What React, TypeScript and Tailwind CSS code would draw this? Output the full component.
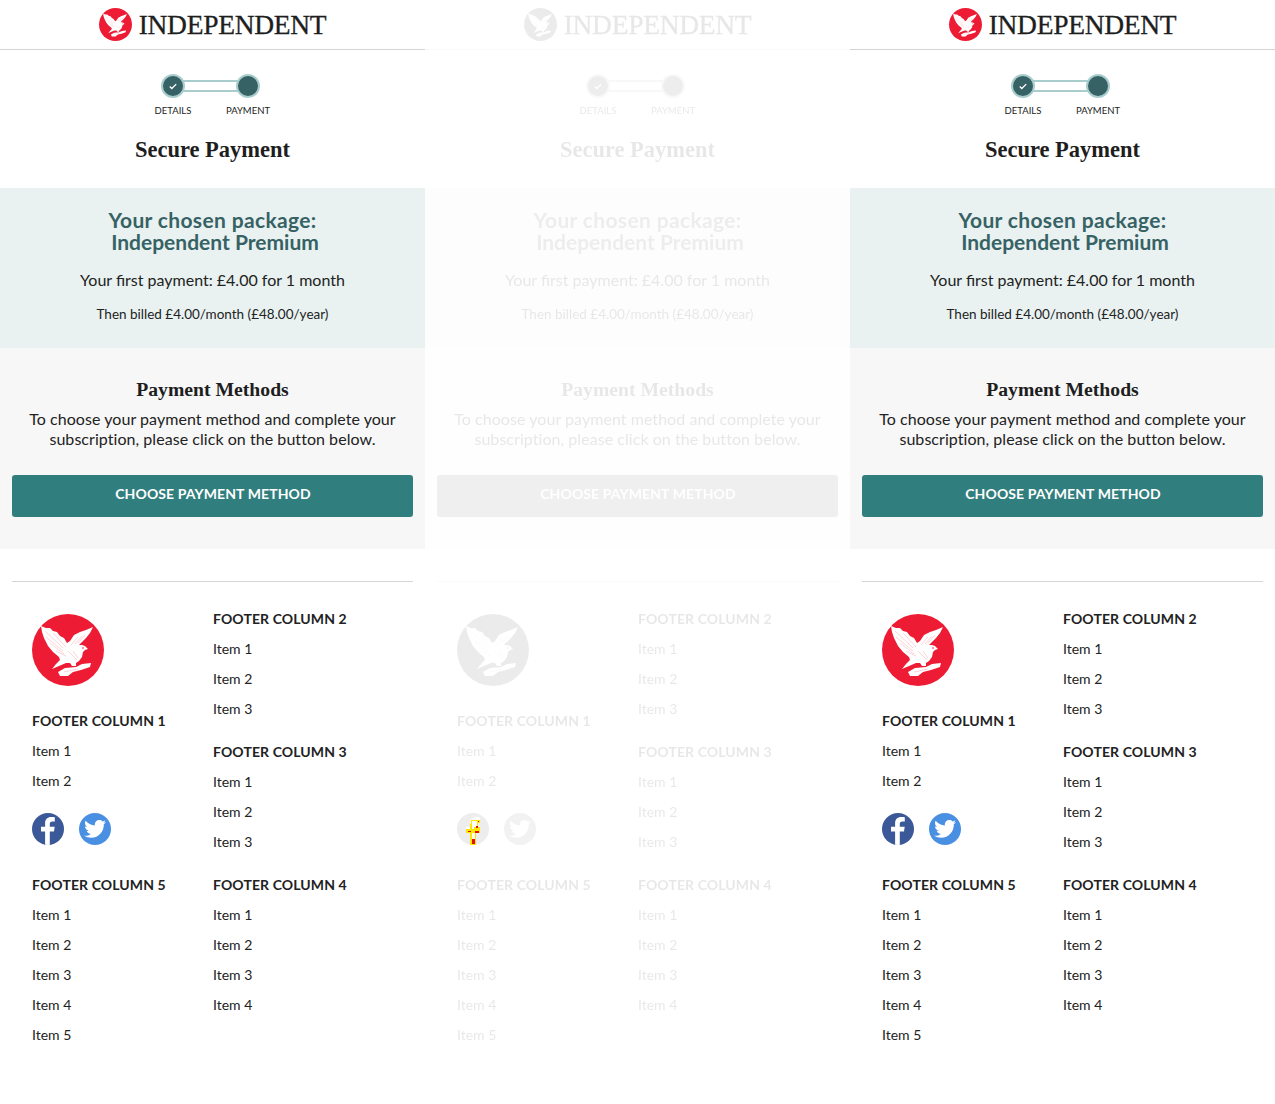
import React from "react";

const serif = "font-['Liberation_Serif',serif]";

const Eagle = ({ className }: { className?: string }) => (
  <svg viewBox="0 0 72 72" className={className}>
    <circle cx="36" cy="36" r="36" fill="#ed1b33" />
    <g fill="#ffffff">
      {/* wings, body and tail */}
      <path d="M9 12L14 14L18 14L21 17L25 18L28 22L32 24L35 29L38 27L42 21L48 18L54 16L61 13L58 19L54 24L50 28L47 31L50 31L53 32L56 35L53 36L51 38L50 43L47 47L44 49L44 52L40 52L38 49L34 49L27 52L20 55L24 50L28 46L27 43L21 38L16 32L12 24L10 18Z" />
      {/* perch */}
      <path d="M26 58L33 54L44 53L50 50L59 49L58 53L49 56L41 58L36 62L28 62Z" />
    </g>
    <g fill="none" stroke="#ed1b33" strokeWidth="0.35" opacity="0.55">
      <path d="M13 17l18 17M14 23l17 14M18 29l14 11M24 37l10 5M21 19l13 14M39 31l7-8M43 30l7-8M46 29l7-8" />
      <path d="M36 37l9 9M41 37l5 7M32 58l14-3" />
    </g>
    <circle cx="51" cy="34" r="0.8" fill="#ed1b33" />
  </svg>
);

const Logo = () => (
  <div className="h-[50px] border-b border-[#d4d4d4] flex items-center justify-center gap-[7px] bg-white">
    <Eagle className="w-[33px] h-[33px]" />
    <span className={`${serif} text-[27.5px] leading-none text-[#1e1e1e] tracking-[-0.3px] mt-[1px] [-webkit-text-stroke:0.3px_#1e1e1e]`}>
      INDEPENDENT
    </span>
  </div>
);

const Steps = () => (
  <div className="h-[138px] flex flex-col items-center">
    <div className="relative w-[99px] h-[24px] mt-[24px] mr-[5px] flex items-center justify-between">
      <div className="absolute left-[10px] right-[10px] top-[6px] h-[12px] border-y-2 border-[#a9cccd]" />
      <div className="relative w-[24px] h-[24px] rounded-full bg-[#376265] border-[2px] border-[#a9cccd] flex items-center justify-center">
        <svg viewBox="0 0 10 8" className="w-[8px] h-[7px]">
          <path d="M1 4l2.500 2.500L9 1" fill="none" stroke="#ffffff" strokeWidth="1.600" />
        </svg>
      </div>
      <div className="relative w-[24px] h-[24px] rounded-full bg-[#376265] border-[2px] border-[#a9cccd]" />
    </div>
    <div className="w-[125px] flex justify-between mt-[6px] mr-[4px] text-[9.5px] leading-[14px] text-[#222]">
      <span className="w-[50px] text-center">DETAILS</span>
      <span className="w-[50px] text-center">PAYMENT</span>
    </div>
    <h1 className={`${serif} mt-[17px] text-[22.5px] leading-[30px] font-bold text-[#1e1e1e]`}>Secure Payment</h1>
  </div>
);

const Col = ({ title, items }: { title: string; items: string[] }) => (
  <div>
    <div className="text-[14px] leading-[20px] font-bold tracking-[0.1px] text-[#222]">{title}</div>
    {items.map((item) => (
      <div key={item} className="mt-[10px] text-[14px] leading-[20px] text-[#222]">
        {item}
      </div>
    ))}
  </div>
);

const items = (n: number) => Array.from({ length: n }, (_, i) => `Item ${i + 1}`);

const Social = () => (
  <div className="flex gap-[15px] mt-[22px]">
    <div className="w-[32px] h-[32px] rounded-full bg-[#3b5998] overflow-hidden">
      <svg viewBox="0 0 32 32" className="w-[32px] h-[32px]">
        <path
          d="M17.800 32V18.600h4.200l.7-4.800h-4.900v-3c0-1.400.5-2.400 2.500-2.400h2.500V4.200c-.5-.1-2-.2-3.600-.2-3.600 0-6.100 2.200-6.100 6.200v3.600H9v4.800h4.100V32z"
          fill="#ffffff"
        />
      </svg>
    </div>
    <div className="w-[32px] h-[32px] rounded-full bg-[#4a90e2] flex items-center justify-center">
      <svg viewBox="0 0 24 24" className="w-[24px] h-[24px]">
        <path
          d="M23 5.100c-.8.4-1.700.6-2.600.7.9-.6 1.600-1.400 2-2.500-.9.5-1.800.9-2.900 1.100C18.700 3.500 17.500 3 16.300 3c-2.500 0-4.500 2-4.500 4.500 0 .4 0 .7.1 1C8.100 8.300 4.800 6.500 2.600 3.800c-.4.7-.6 1.400-.6 2.300 0 1.600.8 2.900 2 3.700-.7 0-1.400-.2-2-.6v.1c0 2.200 1.600 4 3.600 4.400-.4.1-.8.2-1.200.2-.3 0-.6 0-.8-.1.6 1.800 2.200 3.100 4.200 3.100-1.500 1.200-3.500 1.900-5.600 1.900-.4 0-.7 0-1.100-.1 2 1.300 4.400 2 6.900 2 8.300 0 12.800-6.900 12.800-12.800v-.6c.9-.6 1.600-1.400 2.200-2.200z"
          fill="#ffffff"
        />
      </svg>
    </div>
  </div>
);

const Panel = ({ faded }: { faded?: boolean }) => (
  <div className={faded ? "w-[425px] opacity-10 grayscale" : "w-[425px]"}>
    <Logo />
    <Steps />
    <div className="h-[160px] bg-[#e9f2f1] pt-[21px] text-center">
      <h2 className="text-[21px] leading-[22px] font-bold text-[#376265]">
        <span className="tracking-[0.35px]">Your chosen package:</span>
        <br />
        <span className="pl-[5px]">Independent Premium</span>
      </h2>
      <p className="mt-[15px] text-[16px] leading-[24px] text-[#222]">Your first payment: £4.00 for 1 month</p>
      <p className="mt-[12px] text-[13.500px] leading-[20px] text-[#222]">Then billed £4.00/month (£48.00/year)</p>
    </div>
    <div className="h-[201px] bg-[#f7f7f7] px-[12px] pt-[26px] text-center">
      <h3 className={`${serif} text-[19.700px] leading-[30px] font-bold text-[#1e1e1e]`}>Payment Methods</h3>
      <p className="mt-[5px] text-[16px] leading-[20px] tracking-[0.05px] text-[#222]">
        To choose your payment method and complete your
        <br />
        subscription, please click on the button below.
      </p>
      <button className="mt-[26px] w-full h-[42px] rounded-[3px] bg-[#317e7e] text-white text-[14px] font-bold tracking-[0.1px] pb-[6px] pl-[1px]">
        CHOOSE PAYMENT METHOD
      </button>
    </div>
    <div className="mx-[12px] mt-[32px] border-t border-[#d4d4d4] pt-[27px] flex">
      <div className="w-[201px] pl-[20px]">
        <Eagle className="w-[72px] h-[72px] mt-[5px]" />
        <div className="mt-[25px]">
          <Col title="FOOTER COLUMN 1" items={items(2)} />
        </div>
        <Social />
        <div className="mt-[30px]">
          <Col title="FOOTER COLUMN 5" items={items(5)} />
        </div>
      </div>
      <div className="flex flex-col gap-[23px]">
        <Col title="FOOTER COLUMN 2" items={items(3)} />
        <Col title="FOOTER COLUMN 3" items={items(3)} />
        <Col title="FOOTER COLUMN 4" items={items(4)} />
      </div>
    </div>
  </div>
);

export default function App() {
  return (
    <div className="relative w-[1275px] h-[1104px] overflow-hidden bg-white flex font-['Lato',sans-serif]">
      <Panel />
      <Panel faded />
      <Panel />
      {/* render glitch sitting on the faded facebook icon */}
      <svg viewBox="0 0 15 27" className="absolute left-[466px] top-[819px] w-[15px] h-[27px]">
        <path d="M5 1H14V4H12V8H14V14H10V26H4V14H0V10H4V5H5Z" fill="#ffe600" />
        <path d="M6 2H11V8H8V10H6ZM6 14H9V20H6Z" fill="#ffffff" />
        <path d="M12 2H13V3H12ZM10 7H12V9H10ZM2 12H5V13H2ZM9 12H13V14H9ZM6 20H9V25H6Z" fill="#e01010" />
      </svg>
    </div>
  );
}
